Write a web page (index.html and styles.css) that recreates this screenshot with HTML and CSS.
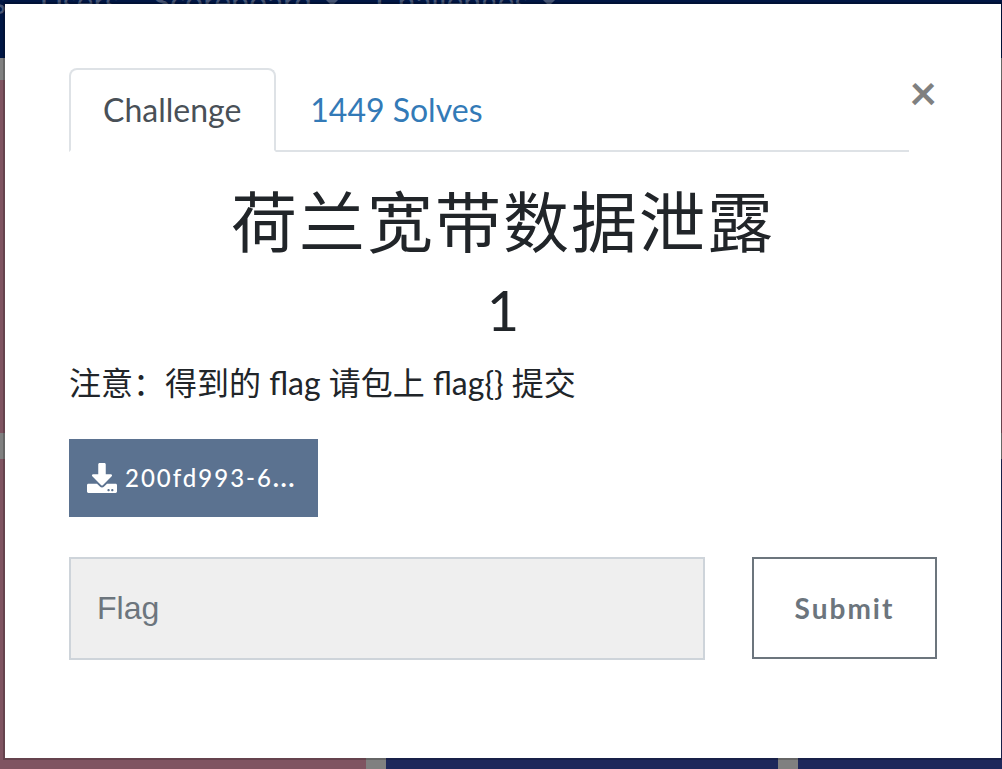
FILE: index.html
```html
<!DOCTYPE html>
<html lang="zh">
<head>
<meta charset="utf-8">
<meta name="viewport" content="width=device-width, initial-scale=1">
<title>荷兰宽带数据泄露</title>
<link rel="stylesheet" href="styles.css">
</head>
<body>
<div class="page" aria-hidden="true">
  <nav class="navbar">
    <span class="nav-item first">s</span>
    <span class="nav-item">Users</span>
    <span class="nav-item">Scoreboard <i class="caret"></i></span>
    <span class="nav-item">Challenges <i class="caret"></i></span>
  </nav>
  <div class="board">
    <div class="tile solved"></div><div class="tile solved"></div><div class="tile solved"></div>
    <div class="tile solved"></div><div class="tile"></div><div class="tile"></div>
  </div>
</div>
<main class="modal" role="dialog" aria-labelledby="challenge-name">
  <header class="modal-header">
    <ul class="tabs">
      <li><a class="tab active" href="#challenge">Challenge</a></li>
      <li><a class="tab" href="#solves">1449 Solves</a></li>
    </ul>
    <button class="close" type="button" aria-label="Close">×</button>
  </header>
  <section id="challenge" class="challenge">
    <h2 class="name" id="challenge-name">荷兰宽带数据泄露</h2>
    <h3 class="value">1</h3>
    <p class="description">注意：得到的 flag 请包上 flag{} 提交</p>
    <a class="file" href="#file">
      <svg class="file-icon" viewBox="0 0 512 512" aria-hidden="true"><path fill="currentColor" d="M216 0h80c13.300 0 24 10.700 24 24v168h87.700c17.800 0 26.700 21.500 14.100 34.100L269.700 378.300c-7.500 7.500-19.800 7.500-27.300 0L90.100 226.100c-12.600-12.600-3.700-34.100 14.100-34.100H192V24c0-13.300 10.700-24 24-24zm296 376v112c0 13.300-10.700 24-24 24H24c-13.300 0-24-10.700-24-24V376c0-13.300 10.700-24 24-24h146.700l49 49c20.100 20.100 52.500 20.100 72.600 0l49-49H488c13.300 0 24 10.700 24 24zm-124 88c0-11-9-20-20-20s-20 9-20 20 9 20 20 20 20-9 20-20zm64 0c0-11-9-20-20-20s-20 9-20 20 9 20 20 20 20-9 20-20z"/></svg>
      <span>200fd993-6<b class="more">...</b></span>
    </a>
    <form class="answer">
      <input class="flag" type="text" placeholder="Flag" aria-label="Flag">
      <button class="submit" type="button">Submit</button>
    </form>
  </section>
</main>
</body>
</html>
```
FILE: styles.css
```css
* {
  box-sizing: border-box;
}

body {
  margin: 0;
  min-height: 100vh;
  position: relative;
  overflow: hidden;
  font: 32px/48px Lato, "Noto Sans CJK SC", sans-serif;
  color: #212529;
}

/* dimmed page behind the dialog */
.page {
  position: absolute;
  inset: 0;
  overflow: hidden;
  background: #808080;
}

.navbar {
  display: flex;
  gap: 34px;
  height: 80px;
  margin-top: -22px;
  padding-right: 32px;
  background: #001644;
  color: #465575;
  white-space: nowrap;
}

.nav-item.first {
  margin-left: -8px;
}

.caret {
  display: inline-block;
  margin-left: 2px;
  vertical-align: 8px;
  border: 10px solid transparent;
  border-top-color: currentColor;
  border-bottom: 0;
}

.board {
  display: grid;
  grid-template-columns: repeat(3, 392px);
  grid-auto-rows: 353px;
  gap: 26px 20px;
  margin: 22px 0 0 -26px;
}

.tile {
  background: #1e285b;
}

.tile.solved {
  background: #7f5461;
}

.modal {
  position: relative;
  margin: 4px 1px 0 5px;
  padding: 64px 64px 98px;
  background: #fff;
  box-shadow: 0 0 0 2px rgba(0, 0, 0, 0.2);
}

.modal-header {
  display: flex;
  align-items: flex-start;
}

.tabs {
  display: flex;
  flex: 1;
  margin: 0;
  padding: 0;
  list-style: none;
  border-bottom: 2px solid #dee2e6;
}

.tab {
  display: block;
  margin-bottom: -2px;
  padding: 16px 33px 16px 32px;
  border: 2px solid transparent;
  border-radius: 8px 8px 0 0;
  color: #337ab7;
  text-decoration: none;
}

.tab.active {
  border-color: #dee2e6 #dee2e6 #fff;
  background: #fff;
  color: #495057;
}

.close {
  padding: 0;
  border: 0;
  background: none;
  font: bold 48px/48px Lato, sans-serif;
  color: #808080;
  cursor: pointer;
}

.challenge {
  padding-top: 32px;
}

.name,
.value {
  margin: 0 0 16px;
  font-weight: 400;
  text-align: center;
}

.name {
  font-size: 66px;
  line-height: 76px;
  letter-spacing: 2px;
}

.value {
  font-size: 56px;
  line-height: 67px;
}

.description {
  margin: 0 0 32px;
}

.file {
  display: flex;
  align-items: center;
  gap: 8px;
  width: fit-content;
  height: 78px;
  padding: 0 22px 0 18px;
  background: #5b7290;
  color: #fff;
  font-size: 24px;
  font-weight: 500;
  letter-spacing: 2px;
  text-decoration: none;
}

.more {
  font-weight: 900;
}

.file-icon {
  width: 30px;
  height: 30px;
}

.answer {
  display: flex;
  align-items: flex-start;
  gap: 47px;
  margin-top: 40px;
}

.flag,
.submit {
  border-radius: 0;
}

.flag {
  flex: 1;
  min-width: 0;
  height: 103px;
  padding: 0 26px;
  border: 2px solid #ced4da;
  background: #efefef;
  font: 32px/48px "Liberation Sans", sans-serif;
  color: #495057;
}

.flag::placeholder {
  color: #6c757d;
  opacity: 1;
}

.submit {
  min-width: 185px;
  height: 102px;
  padding: 0 40px;
  border: 2px solid #6c757d;
  background: #fff;
  color: #6c757d;
  font: bold 28px/48px Lato, sans-serif;
  letter-spacing: 2px;
  cursor: pointer;
}
```
